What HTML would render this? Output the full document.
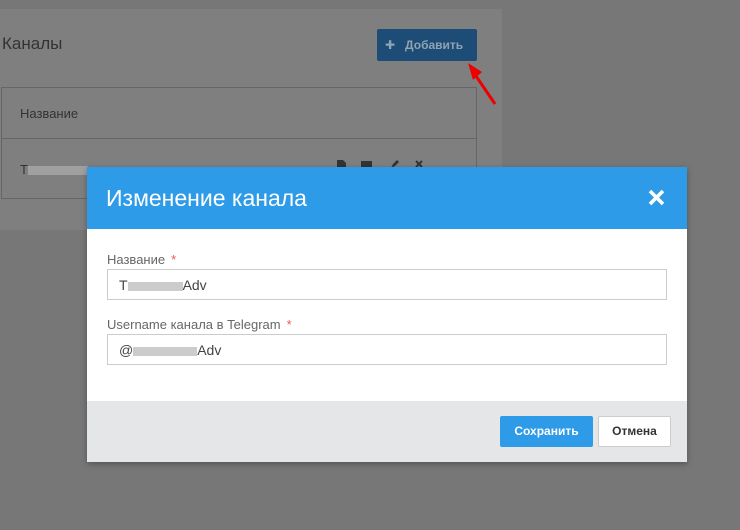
<!DOCTYPE html>
<html><head><meta charset="utf-8"><style>
*{box-sizing:border-box;margin:0;padding:0}
body{width:740px;height:530px;background:#777;font-family:"Liberation Sans","DejaVu Sans",sans-serif;position:relative;overflow:hidden}
.panel{position:absolute;left:0;top:9px;width:502px;height:221px;background:#7f7f7f}
.abs{position:absolute}
.modal{position:absolute;left:87px;top:167px;width:600px;height:295px;background:#fff;box-shadow:0 2px 6px rgba(0,0,0,.3)}
.hdr{height:62px;background:#2e9be8;color:#fff;font-size:23px;padding:18px 0 0 19px;position:relative}
.lbl{position:absolute;left:20px;font-size:13px;color:#666}
.lbl b{color:#e55;font-weight:normal;margin-left:6px}
.inp{position:absolute;left:20px;width:560px;height:31px;border:1px solid #ccc;font-size:14px;color:#444;padding:7px 11px}
.ft{position:absolute;left:0;top:234px;width:600px;height:61px;background:#e5e6e8}
.blur{display:inline-block;width:55px;height:9px;background:#ccc;vertical-align:middle}
</style></head><body>
<div class="panel"></div>
<div class="abs" style="left:2px;top:34px;font-size:17px;color:#333">Каналы</div>
<div class="abs" style="left:377px;top:29px;width:100px;height:32px;background:#1d4d77;border-radius:2px;color:#8fa3b3;font-size:12px;font-weight:bold;padding:9px 0 0 8px">✚&nbsp;&nbsp; Добавить</div>
<svg class="abs" style="left:462px;top:58px" width="38" height="48"><path d="M33 46 L14 18" stroke="#e00" stroke-width="3"/><path d="M6 5 L20 14 L11 22Z" fill="#e00"/></svg>
<div class="abs" style="left:1px;top:87px;width:476px;height:112px;border:1px solid #666"></div>
<div class="abs" style="left:1px;top:138px;width:476px;height:1px;background:#666"></div>
<div class="abs" style="left:20px;top:106px;font-size:13px;color:#333">Название</div>
<div class="abs" style="left:20px;top:162px;font-size:13px;color:#333">T<span class="blur" style="background:#a0a0a0;width:60px"></span></div>
<svg class="abs" style="left:336px;top:160px" width="92" height="8"><path d="M1 0h6l3 3v5H1z" fill="#333"/><rect x="25" y="1" width="11" height="7" fill="#333"/><path d="M55 8l2-4 4-4 2 2-4 4z" fill="#333"/><path d="M80 1l6 6M86 1l-6 6" stroke="#333" stroke-width="2"/></svg>
<div class="modal">
<div class="hdr">Изменение канала<svg style="position:absolute;right:22px;top:22px" width="17" height="17"><path d="M2 2L15 15M15 2L2 15" stroke="#fff" stroke-width="3.6"/></svg></div>
<div class="lbl" style="top:85px">Название<b>*</b></div>
<div class="inp" style="top:102px">T<span class="blur"></span>Adv</div>
<div class="lbl" style="top:150px">Username канала в Telegram<b>*</b></div>
<div class="inp" style="top:167px">@<span class="blur" style="width:64px"></span>Adv</div>
<div class="ft">
<div class="abs" style="left:413px;top:15px;width:93px;height:31px;background:#2e9be8;border-radius:2px;color:#fff;font-size:12px;font-weight:bold;text-align:center;line-height:31px">Сохранить</div>
<div class="abs" style="left:511px;top:15px;width:73px;height:31px;background:#fff;border:1px solid #ccc;border-radius:2px;color:#333;font-size:12px;font-weight:bold;text-align:center;line-height:29px">Отмена</div>
</div>
</div>
</body></html>
